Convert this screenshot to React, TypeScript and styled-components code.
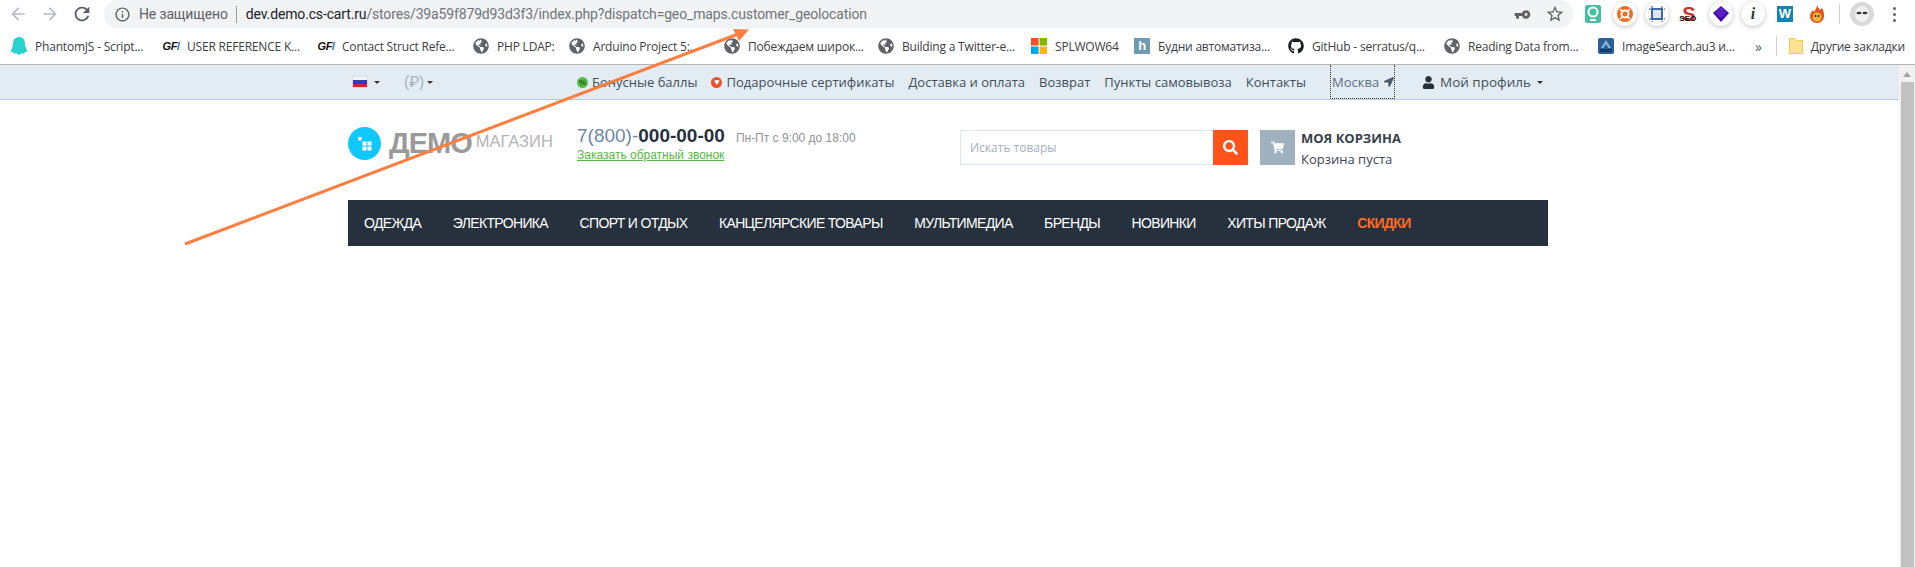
import React from 'react';
import styled, { createGlobalStyle } from 'styled-components';
import { FaGithub, FaGlobeAmericas, FaLocationArrow, FaSearch, FaShoppingCart, FaUser } from 'react-icons/fa';
import { MdArrowBack, MdArrowForward, MdInfoOutline, MdRefresh, MdStarBorder, MdVpnKey } from 'react-icons/md';

const GlobalStyle = createGlobalStyle`
  html, body { margin: 0; padding: 0; background: #fff; }
  body { font-family: "Open Sans", "Liberation Sans", sans-serif; }
`;

const Phantom = () => (
  <svg width="16" height="18" viewBox="0 0 16 18">
    <path d="M8 0c4 0 6 3 6 7 0 3 2 5 2 7 0 1-1 1-2 1l-1 2-2-1-3 2-3-2-2 1-1-2c-1 0-2 0-2-1 0-2 2-4 2-7 0-4 2-7 6-7z" fill="#27d3cf" />
  </svg>
);

const MsLogo = () => (
  <svg width="16" height="16" viewBox="0 0 16 16">
    <rect width="7.5" height="7.5" fill="#f25022" />
    <rect x="8.5" width="7.5" height="7.5" fill="#7fba00" />
    <rect y="8.5" width="7.5" height="7.5" fill="#00a4ef" />
    <rect x="8.5" y="8.5" width="7.5" height="7.5" fill="#ffb900" />
  </svg>
);

const AutoitLogo = () => (
  <svg width="16" height="16" viewBox="0 0 16 16">
    <rect width="16" height="16" rx="2" fill="#2b5f96" />
    <path d="M8 2l5 8h-2.500L8 6 5.500 10H3z" fill="#8fb4d8" />
    <rect x="2" y="11" width="12" height="3" fill="#173c66" />
  </svg>
);

const Folder = () => (
  <svg width="14" height="16" viewBox="0 0 14 16">
    <path d="M1 .5h5l1.500 2h6v13H.5v-15z" fill="#fde293" stroke="#f2c94c" />
  </svg>
);

const topLinks = ['Доставка и оплата', 'Возврат', 'Пункты самовывоза', 'Контакты'];

const menuItems = ['Одежда', 'Электроника', 'Спорт и отдых', 'Канцелярские товары', 'Мультимедиа', 'Бренды', 'Новинки', 'Хиты продаж'];

const App = () => {
  const globe = <FaGlobeAmericas size={16} color="#5f6368" />;
  const gfi = <Gfi>GF<i>I</i></Gfi>;
  const bookmarks = [
    { title: 'PhantomJS - Script...', width: 152, icon: <Phantom /> },
    { title: 'USER REFERENCE K...', width: 155, icon: gfi },
    { title: 'Contact Struct Refe...', width: 155, icon: gfi },
    { title: 'PHP LDAP:', width: 96, icon: globe },
    { title: 'Arduino Project 5:...', width: 155, icon: globe },
    { title: 'Побеждаем широк...', width: 154, icon: globe },
    { title: 'Building a Twitter-e...', width: 153, icon: globe },
    { title: 'SPLWOW64', width: 103, icon: <MsLogo /> },
    { title: 'Будни автоматиза...', width: 154, icon: <HabrIcon>h</HabrIcon> },
    { title: 'GitHub - serratus/q...', width: 156, icon: <FaGithub size={16} color="#1b1f23" /> },
    { title: 'Reading Data from...', width: 154, icon: globe },
    { title: 'ImageSearch.au3 и...', width: 150, icon: <AutoitLogo /> },
  ];

  return (
    <Window>
      <GlobalStyle />
      <Toolbar>
        <NavButton $muted><MdArrowBack size={20} /></NavButton>
        <NavButton $muted><MdArrowForward size={20} /></NavButton>
        <NavButton><MdRefresh size={22} /></NavButton>
        <AddressBar>
          <MdInfoOutline size={17} color="#5f6368" />
          <Insecure>Не защищено</Insecure>
          <Divider />
          <Url><b>dev.demo.cs-cart.ru</b>/stores/39a59f879d93d3f3/index.php?dispatch=geo_maps.customer_geolocation</Url>
          <AddressTools>
            <MdVpnKey size={17} color="#5f6368" style={{ transform: 'scaleX(-1)' }} />
            <MdStarBorder size={20} color="#5f6368" />
          </AddressTools>
        </AddressBar>
        <Extensions>
          <ExtSlot>
            <svg width="16" height="18" viewBox="0 0 16 18">
              <rect width="16" height="18" rx="2" fill="#46bfa5" />
              <circle cx="8" cy="7" r="4.500" fill="none" stroke="#fff" strokeWidth="2" />
              <rect x="5" y="14" width="6" height="2" fill="#fff" />
            </svg>
          </ExtSlot>
          <ExtSlot $round>
            <svg width="16" height="16" viewBox="0 0 16 16">
              <circle cx="8" cy="8" r="8" fill="#f26b21" />
              <circle cx="8" cy="8" r="3.500" fill="none" stroke="#fff" strokeWidth="2" />
              <path d="M3 3l3 3M13 3l-3 3M3 13l3-3M13 13l-3-3" stroke="#fff" strokeWidth="1.500" />
            </svg>
          </ExtSlot>
          <ExtSlot $round>
            <svg width="16" height="16" viewBox="0 0 16 16">
              <rect x="3" y="3" width="10" height="10" fill="#dbe7f7" stroke="#1d4f9c" strokeWidth="1.500" />
              <path d="M3 0v16M13 0v16M0 3h16M0 13h16" stroke="#1d4f9c" strokeWidth="1" strokeDasharray="2 1" fill="none" />
            </svg>
          </ExtSlot>
          <ExtSlot>
            <SeoMark>S<small>SEO</small></SeoMark>
          </ExtSlot>
          <ExtSlot $round>
            <svg width="16" height="16" viewBox="0 0 16 16">
              <path d="M8 0l8 7-8 9-8-9z" fill="#3a0ca3" />
              <path d="M8 1l6 6-6 5-6-5z" fill="#5a1fc4" />
            </svg>
          </ExtSlot>
          <ExtSlot $round>
            <InfoMark>i</InfoMark>
          </ExtSlot>
          <ExtSlot>
            <WordMark>W</WordMark>
          </ExtSlot>
          <ExtSlot>
            <svg width="14" height="18" viewBox="0 0 14 18">
              <path d="M7 0c1 3 2 3 3 5l2-2c2 3 2 6 2 8 0 4-3 7-7 7s-7-3-7-7c0-3 2-5 3-6l1 2c1-2 3-4 3-7z" fill="#e2531d" />
              <circle cx="7" cy="12" r="4.500" fill="#f6b73c" />
              <circle cx="5.500" cy="11" r="1" fill="#222" />
              <circle cx="8.500" cy="11" r="1" fill="#222" />
            </svg>
          </ExtSlot>
          <ExtSeparator />
          <Avatar>
            <svg width="24" height="24" viewBox="0 0 24 24">
              <circle cx="12" cy="12" r="12" fill="#d9d9d9" />
              <ellipse cx="12" cy="12" rx="7" ry="8" fill="#f1f1f1" />
              <ellipse cx="9" cy="11" rx="2.500" ry="1.300" fill="#333" />
              <ellipse cx="15" cy="11" rx="2.500" ry="1.300" fill="#333" />
            </svg>
          </Avatar>
          <MenuDots><i /><i /><i /></MenuDots>
        </Extensions>
      </Toolbar>

      <BookmarksBar>
        {bookmarks.map((b) => (
          <Bookmark key={b.title} $width={b.width}>
            <BookmarkIcon>{b.icon}</BookmarkIcon>
            <span>{b.title}</span>
          </Bookmark>
        ))}
        <BookmarksMore>»</BookmarksMore>
        <ToolbarSeparator />
        <Bookmark $width={112}>
          <BookmarkIcon><Folder /></BookmarkIcon>
          <span>Другие закладки</span>
        </Bookmark>
      </BookmarksBar>

      <Viewport>
        <Page>
          <TopBar>
            <TopBarInner>
              <FlagCell>
                <Flag />
                <Caret />
              </FlagCell>
              <CurrencyCell>
                (₽)
                <Caret />
              </CurrencyCell>
              <TopLinks>
                <TopLink>
                  <BonusIcon>%</BonusIcon>
                  Бонусные баллы
                </TopLink>
                <TopLink>
                  <GiftIcon>♥</GiftIcon>
                  Подарочные сертификаты
                </TopLink>
                {topLinks.map((link) => (
                  <TopLink key={link}>{link}</TopLink>
                ))}
              </TopLinks>
              <CityBox>
                Москва
                <FaLocationArrow size={10} color="#4a5a68" />
              </CityBox>
              <ProfileCell>
                <FaUser size={13} color="#24303c" />
                Мой профиль
                <Caret />
              </ProfileCell>
            </TopBarInner>
          </TopBar>

          <Header>
            <Logo>
              <LogoBadge>
                <svg width="14" height="14" viewBox="0 0 14 14">
                  <rect width="3.500" height="3.500" fill="#fff" />
                  <rect x="4.500" y="4.500" width="4" height="4" fill="#fff" />
                  <rect x="9.500" y="4.500" width="4" height="4" fill="#fff" />
                  <rect x="4.500" y="9.500" width="4" height="4" fill="#fff" />
                  <rect x="9.500" y="9.500" width="4" height="4" fill="#fff" />
                </svg>
              </LogoBadge>
              <LogoStrong>ДЕМО</LogoStrong>
              <LogoLight>МАГАЗИН</LogoLight>
            </Logo>
            <Phone>
              <PhoneRow>
                <PhoneNumber>7(800)-<b>000-00-00</b></PhoneNumber>
                <PhoneHours>Пн-Пт с 9:00 до 18:00</PhoneHours>
              </PhoneRow>
              <CallbackLink>Заказать обратный звонок</CallbackLink>
            </Phone>
            <Search>
              <SearchField>Искать товары</SearchField>
              <SearchButton><FaSearch size={15} color="#fff" /></SearchButton>
            </Search>
            <Cart>
              <CartIcon><FaShoppingCart size={13} color="#fff" /></CartIcon>
              <CartText>
                <CartTitle>Моя корзина</CartTitle>
                <CartEmpty>Корзина пуста</CartEmpty>
              </CartText>
            </Cart>
          </Header>

          <MainMenu>
            {menuItems.map((item) => (
              <MenuItem key={item}>{item}</MenuItem>
            ))}
            <MenuItem $accent>Скидки</MenuItem>
          </MainMenu>
        </Page>
        <Scrollbar>
          <ScrollArrow />
          <ScrollThumb />
        </Scrollbar>
      </Viewport>

      <Annotation width="1915" height="567" viewBox="0 0 1915 567">
        <line x1="185" y1="244" x2="738" y2="34" stroke="#ff7f41" strokeWidth="3" />
        <polygon points="749,29.500 733,29 739,41" fill="#ff7f41" />
      </Annotation>
    </Window>
  );
};

export default App;

const Window = styled.div`
  position: relative;
  display: flex;
  flex-direction: column;
  width: 1915px;
  height: 567px;
  overflow: hidden;
  background: #fff;
`;

const Toolbar = styled.div`
  display: flex;
  align-items: center;
  height: 28px;
  padding-left: 2px;
  background: #fff;
`;

const NavButton = styled.div<{ $muted?: boolean }>`
  display: flex;
  align-items: center;
  justify-content: center;
  width: 32px;
  color: ${(p) => (p.$muted ? '#b9bcc0' : '#5a5e63')};
`;

const AddressBar = styled.div`
  display: flex;
  align-items: center;
  width: 1469px;
  height: 28px;
  margin-left: 6px;
  padding: 0 8px 0 10px;
  box-sizing: border-box;
  border-radius: 14px;
  background: #f1f3f4;
  font-family: Roboto, "Liberation Sans", sans-serif;
  font-size: 14px;
  letter-spacing: -0.15px;
`;

const Insecure = styled.span`
  margin-left: 8px;
  color: #5f6368;
`;

const Divider = styled.span`
  width: 1px;
  height: 17px;
  margin: 0 9px 0 8px;
  background: #9aa0a6;
`;

const Url = styled.span`
  color: #70757a;
  white-space: nowrap;

  & b {
    font-weight: 400;
    color: #202124;
  }
`;

const AddressTools = styled.div`
  display: flex;
  align-items: center;
  gap: 14px;
  margin-left: auto;
`;

const Extensions = styled.div`
  display: flex;
  align-items: center;
  margin-left: 4px;
`;

const ExtSlot = styled.div<{ $round?: boolean }>`
  display: flex;
  align-items: center;
  justify-content: center;
  width: ${(p) => (p.$round ? '24px' : '20px')};
  height: ${(p) => (p.$round ? '24px' : '20px')};
  margin: 0 ${(p) => (p.$round ? '4px' : '6px')};
  border-radius: 50%;
  background: ${(p) => (p.$round ? '#fff' : 'transparent')};
  box-shadow: ${(p) => (p.$round ? '0 1px 4px rgba(0, 0, 0, 0.25)' : 'none')};
`;

const SeoMark = styled.span`
  position: relative;
  font: 700 20px/20px "Liberation Sans", sans-serif;
  color: #c9302c;

  & small {
    position: absolute;
    left: -3px;
    top: 10px;
    font-size: 8px;
    line-height: 9px;
    color: #111;
  }
`;

const InfoMark = styled.span`
  font: italic 700 16px/16px "Liberation Serif", serif;
  color: #333;
`;

const WordMark = styled.span`
  display: block;
  width: 16px;
  height: 16px;
  background: #0f84b5;
  color: #fff;
  font: 700 13px/16px "Liberation Sans", sans-serif;
  text-align: center;
`;

const ToolbarSeparator = styled.span`
  flex: none;
  width: 1px;
  height: 20px;
  margin: 0 12px 0 10px;
  background: #d0d3d6;
`;

const ExtSeparator = styled(ToolbarSeparator)`
  margin: 0 10px 0 6px;
`;

const Avatar = styled.div`
  display: flex;
`;

const MenuDots = styled.div`
  display: flex;
  flex-direction: column;
  gap: 3px;
  margin-left: 19px;

  & i {
    display: block;
    width: 3px;
    height: 3px;
    border-radius: 50%;
    background: #5f6368;
  }
`;

const BookmarksBar = styled.div`
  display: flex;
  align-items: center;
  height: 37px;
  padding-left: 11px;
  box-sizing: border-box;
  border-bottom: 1px solid #b5b5b8;
  font-family: "Open Sans", sans-serif;
  font-size: 12px;
  letter-spacing: -0.2px;
  color: #3c4043;
`;

const Bookmark = styled.div<{ $width: number }>`
  display: flex;
  align-items: center;
  flex: none;
  width: ${(p) => p.$width}px;
  gap: 8px;
  white-space: nowrap;
`;

const BookmarkIcon = styled.span`
  display: flex;
  align-items: center;
  justify-content: center;
  width: 16px;
`;

const Gfi = styled.span`
  font: italic 900 11px/12px "Liberation Sans", sans-serif;
  letter-spacing: -0.5px;
  color: #111;

  & i {
    color: #4a7fb5;
  }
`;

const HabrIcon = styled.span`
  display: block;
  width: 16px;
  height: 16px;
  background: #6f9ab0;
  color: #fff;
  font: 700 13px/16px "Liberation Sans", sans-serif;
  text-align: center;
`;

const BookmarksMore = styled.span`
  margin: 0 4px 0 7px;
  font-size: 14px;
  color: #5f6368;
`;

const Viewport = styled.div`
  display: flex;
  flex: 1;
  min-height: 0;
`;

const Page = styled.div`
  flex: 1;
  min-width: 0;
`;

const TopBar = styled.div`
  height: 35px;
  box-sizing: border-box;
  border-bottom: 1px solid #b4cde0;
  background: #e4ecf3;
  font-family: "Open Sans", sans-serif;
  font-size: 13px;
  color: #404f5c;
`;

const TopBarInner = styled.div`
  display: grid;
  grid-template-columns: 51px 173px 753px 92px 1fr;
  align-items: center;
  height: 34px;
  margin-left: 353px;
`;

const FlagCell = styled.div`
  display: flex;
  align-items: center;
  gap: 7px;
`;

const Flag = styled.span`
  width: 14px;
  height: 10px;
  background: linear-gradient(#f4f4f4 33%, #2b3fb5 33% 66%, #d8232a 66%);
  box-shadow: 0 0 1px rgba(0, 0, 0, 0.4);
`;

const Caret = styled.span`
  width: 0;
  height: 0;
  border-left: 3px solid transparent;
  border-right: 3px solid transparent;
  border-top: 3px solid #333;
`;

const CurrencyCell = styled.div`
  display: flex;
  align-items: center;
  gap: 3px;
  font-family: Roboto, sans-serif;
  font-size: 15px;
  color: #a5b2be;
`;

const TopLinks = styled.div`
  display: flex;
  align-items: center;
  gap: 14px;
`;

const TopLink = styled.span`
  display: inline-flex;
  align-items: center;
  gap: 4px;
  white-space: nowrap;
`;

const BonusIcon = styled.span`
  display: inline-block;
  width: 11px;
  height: 11px;
  border-radius: 50%;
  background: #57b947;
  color: #1e5a16;
  font: 700 8px/11px "Liberation Sans", sans-serif;
  text-align: center;
`;

const GiftIcon = styled.span`
  display: inline-block;
  width: 11px;
  height: 11px;
  border-radius: 50%;
  background: #ee4f2a;
  color: #fff;
  font: 700 9px/11px "Liberation Sans", sans-serif;
  text-align: center;
`;

const CityBox = styled.div`
  display: flex;
  align-items: center;
  gap: 5px;
  width: 65px;
  height: 34px;
  box-sizing: border-box;
  padding-left: 1px;
  border: 1px dotted #333;
  border-top: 0;
  color: #5c7081;
`;

const ProfileCell = styled.div`
  display: flex;
  align-items: center;
  gap: 5px;
  font-size: 13.5px;

  & > span {
    margin-left: 1px;
  }
`;

const Header = styled.div`
  display: grid;
  grid-template-columns: 229px 383px 300px 1fr;
  height: 100px;
  margin-left: 348px;
  padding-top: 27px;
  box-sizing: border-box;
`;

const Logo = styled.div`
  display: flex;
  align-items: center;
  height: 33px;
`;

const LogoBadge = styled.div`
  display: flex;
  align-items: center;
  justify-content: center;
  width: 33px;
  height: 33px;
  margin-right: 8px;
  border-radius: 50%;
  background: #0ec8ff;
`;

const LogoStrong = styled.span`
  font: 700 29px/33px "Liberation Sans", sans-serif;
  letter-spacing: -1px;
  color: #9a9a9a;
`;

const LogoLight = styled.span`
  margin: -4px 0 0 4px;
  font: 400 16.5px/33px "Liberation Sans", sans-serif;
  color: #b4b4b4;
`;

const Phone = styled.div`
  font-family: "Liberation Sans", sans-serif;
`;

const PhoneRow = styled.div`
  display: flex;
  align-items: baseline;
  gap: 11px;
  margin-top: -3px;
`;

const PhoneNumber = styled.span`
  font-size: 19px;
  line-height: 24px;
  color: #6d87a5;

  & b {
    color: #27313d;
  }
`;

const PhoneHours = styled.span`
  font-size: 12px;
  color: #8f9499;
`;

const CallbackLink = styled.a`
  display: block;
  font-size: 12px;
  line-height: 14px;
  color: #55b83e;
  text-decoration: underline;
`;

const Search = styled.div`
  display: flex;
  width: 288px;
  height: 35px;
  margin-top: 3px;
`;

const SearchField = styled.div`
  flex: 1;
  box-sizing: border-box;
  padding-left: 9px;
  border: 1px solid #dde5ee;
  border-right: 0;
  font-size: 12px;
  line-height: 33px;
  color: #a3b0bd;
`;

const SearchButton = styled.div`
  display: flex;
  align-items: center;
  justify-content: center;
  width: 35px;
  background: #ff5319;
`;

const Cart = styled.div`
  display: flex;
  gap: 6px;
  margin-top: 3px;
`;

const CartIcon = styled.div`
  display: flex;
  align-items: center;
  justify-content: center;
  width: 35px;
  height: 35px;
  background: #9fb1bf;
`;

const CartText = styled.div`
  display: flex;
  flex-direction: column;
  gap: 3px;
  margin-top: -1px;
  font-size: 13px;
  line-height: 18px;
  color: #3a4652;
`;

const CartTitle = styled.span`
  font-weight: 700;
  text-transform: uppercase;
  color: #333f4b;
`;

const CartEmpty = styled.span``;

const MainMenu = styled.nav`
  display: flex;
  align-items: center;
  width: 1200px;
  height: 46px;
  margin-left: 348px;
  padding: 0 0 0 16px;
  box-sizing: border-box;
  gap: 31.5px;
  background: #26313d;
`;

const MenuItem = styled.a<{ $accent?: boolean }>`
  font: ${(p) => (p.$accent ? 700 : 400)} 14px/1 "Liberation Sans", sans-serif;
  letter-spacing: -0.65px;
  text-transform: uppercase;
  white-space: nowrap;
  color: ${(p) => (p.$accent ? '#ff6a1f' : '#fff')};
`;

const Scrollbar = styled.div`
  display: flex;
  flex-direction: column;
  align-items: center;
  flex: none;
  width: 16px;
  background: #f1f1f1;
`;

const ScrollArrow = styled.div`
  width: 0;
  height: 0;
  margin: 7px 0 5px;
  border-left: 4px solid transparent;
  border-right: 4px solid transparent;
  border-bottom: 5px solid #a3a3a3;
`;

const ScrollThumb = styled.div`
  flex: 1;
  width: 13px;
  background: #c1c1c1;
`;

const Annotation = styled.svg`
  position: absolute;
  top: 0;
  left: 0;
  pointer-events: none;
`;
